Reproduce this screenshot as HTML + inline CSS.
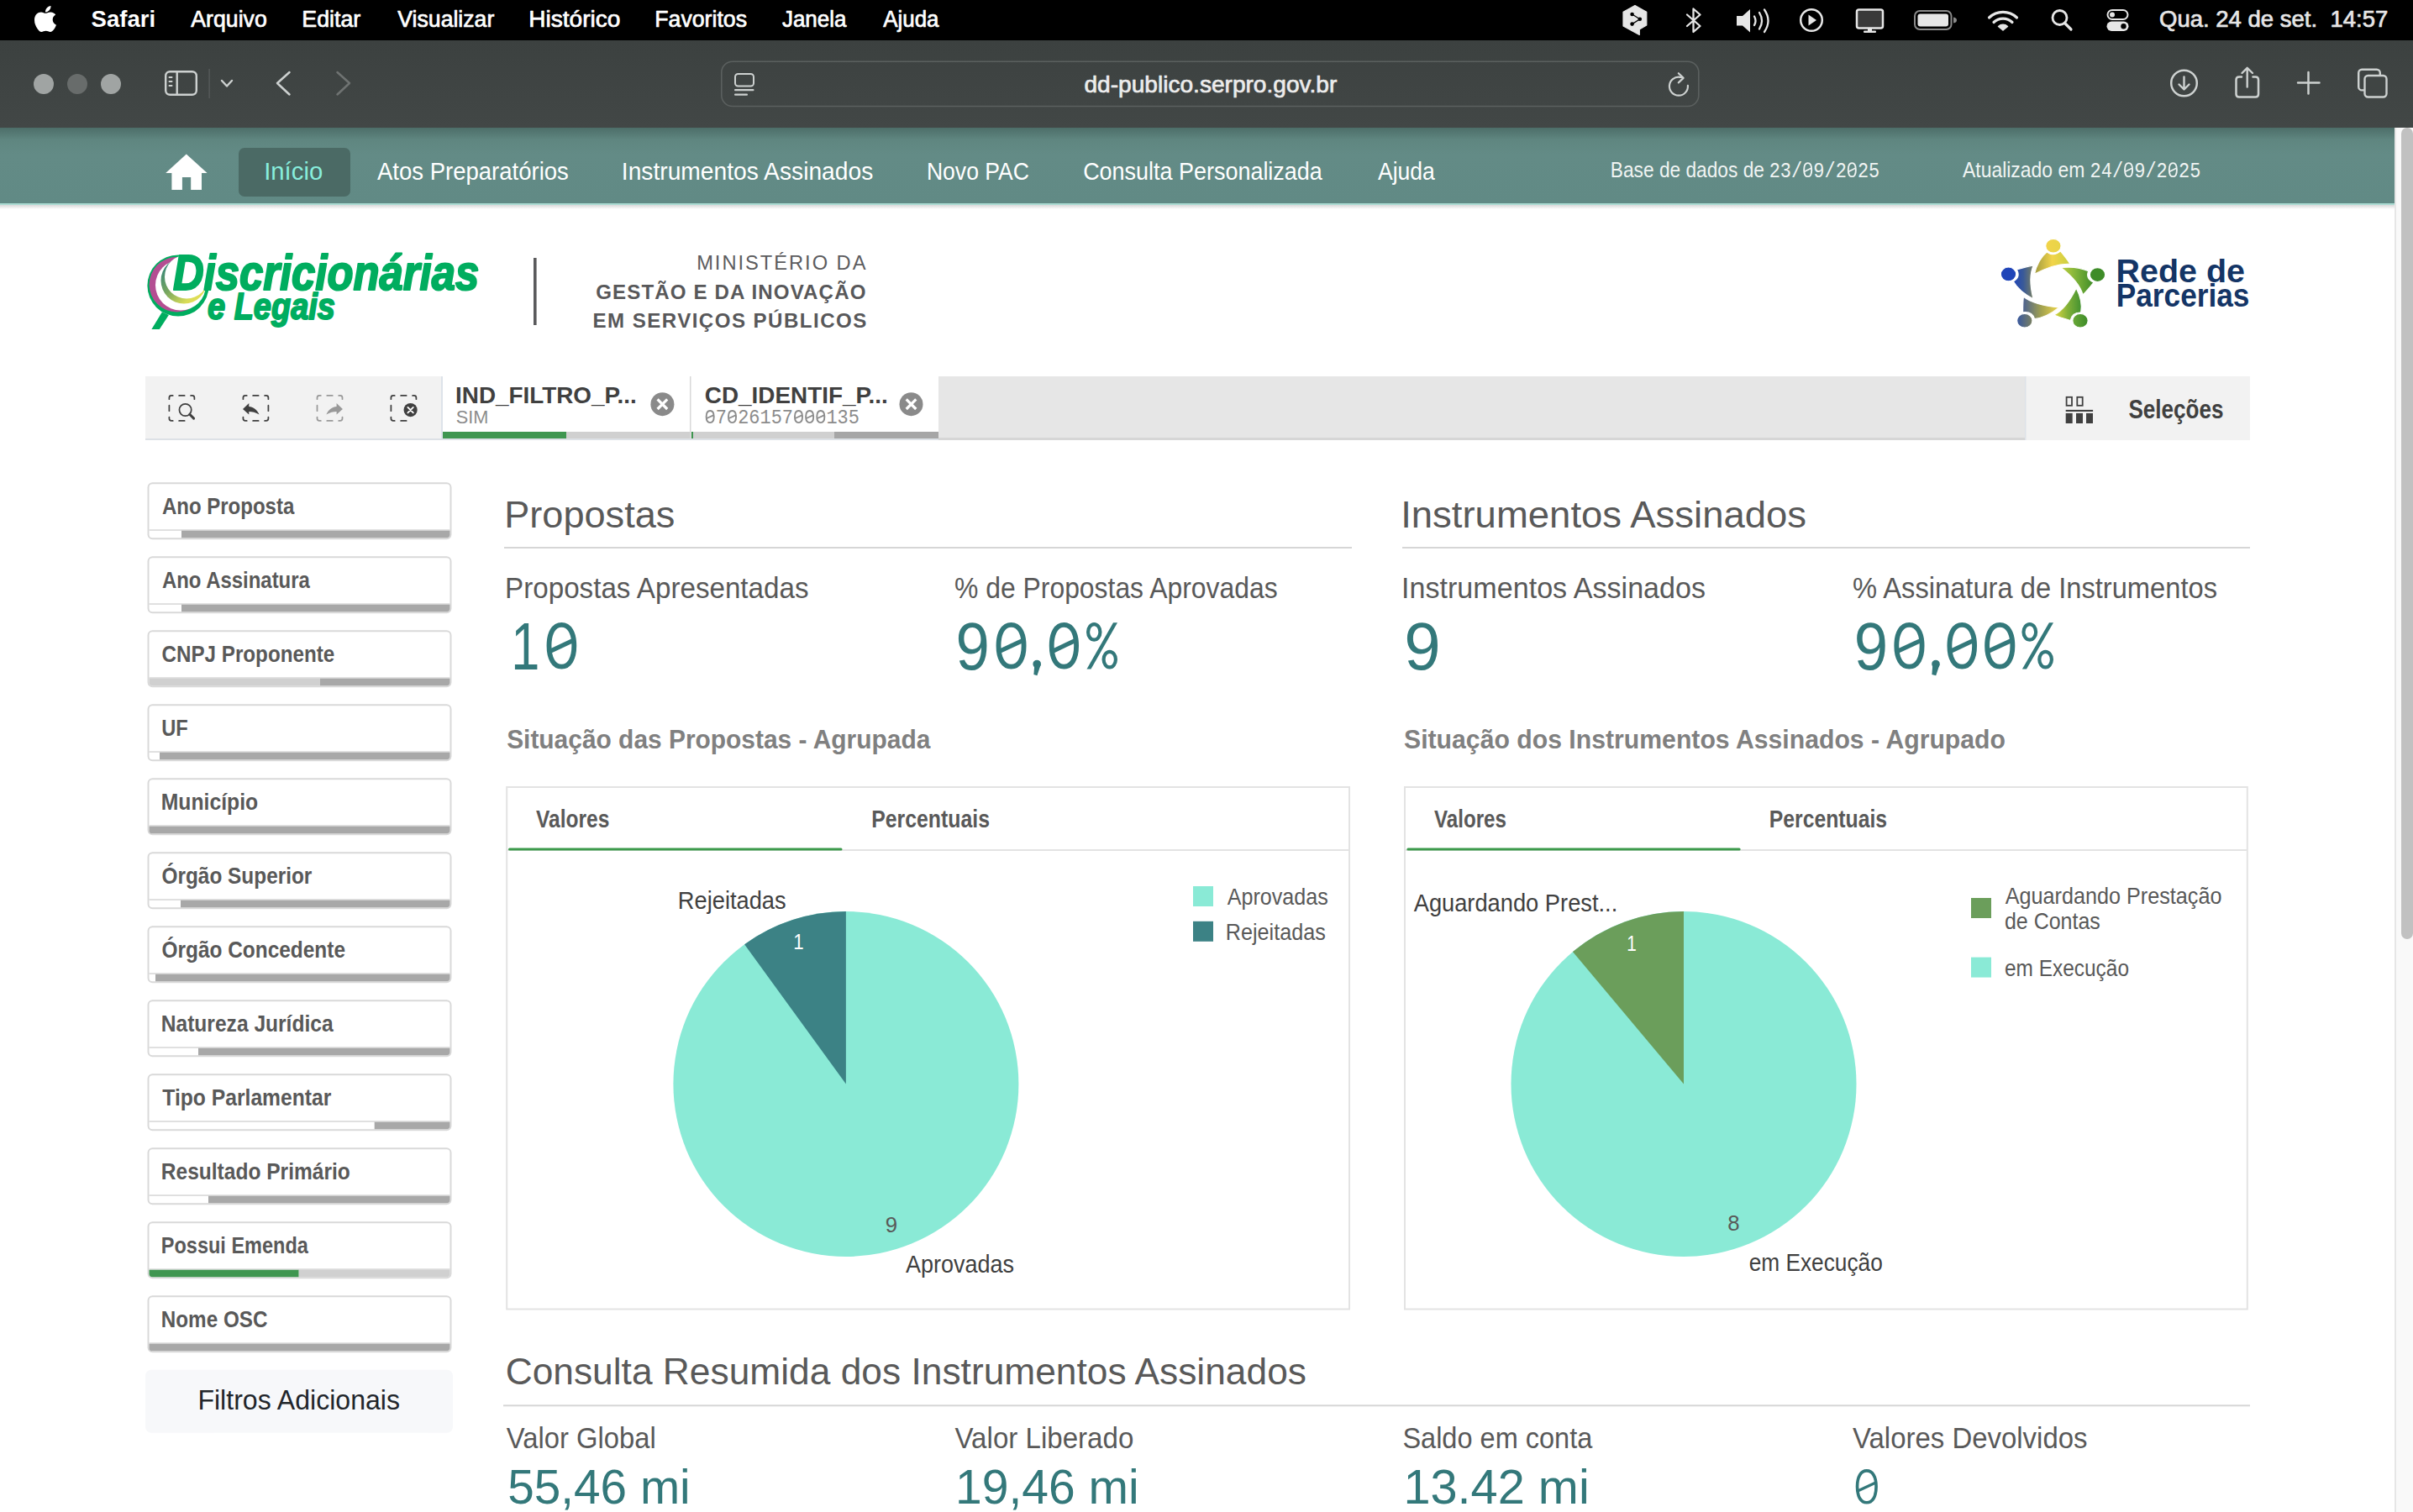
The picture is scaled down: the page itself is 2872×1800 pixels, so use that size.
<!DOCTYPE html>
<html><head><meta charset="utf-8"><title>Discricionárias e Legais</title>
<style>
html,body{margin:0;padding:0;background:#fff;width:2872px;height:1800px;overflow:hidden}
svg{display:block}
text{white-space:pre}
.sans{font-family:"Liberation Sans",sans-serif}
.sansb{font-family:"Liberation Sans",sans-serif;font-weight:bold}
.sansbi{font-family:"Liberation Sans",sans-serif;font-weight:bold;font-style:italic}
.mono{font-family:"Liberation Mono",monospace}
</style></head><body>
<svg width="2872" height="1800" viewBox="0 0 2872 1800">
<defs>
<linearGradient id="navg" x1="0" y1="0" x2="0" y2="1">
<stop offset="0" stop-color="#4d6e69"/><stop offset="0.16" stop-color="#5f8680"/><stop offset="0.35" stop-color="#638b86"/><stop offset="1" stop-color="#618a85"/>
</linearGradient>
<linearGradient id="shad" x1="0" y1="0" x2="0" y2="1">
<stop offset="0" stop-color="#d8d8d8"/><stop offset="1" stop-color="#ffffff"/>
</linearGradient>
<linearGradient id="tbg" x1="0" y1="0" x2="0" y2="1"><stop offset="0" stop-color="#3c4140"/><stop offset="1" stop-color="#424746"/></linearGradient>
</defs>
<rect x="0" y="0" width="2872" height="1800" fill="#ffffff"/>
<!-- menu bar -->
<rect x="0" y="0" width="2872" height="48" fill="#000"/>
<!-- safari toolbar -->
<rect x="0" y="48" width="2872" height="104" fill="url(#tbg)"/>
<circle cx="52" cy="100" r="12" fill="#a0a4a3"/>
<circle cx="92" cy="100" r="12" fill="#686c6b"/>
<circle cx="132" cy="100" r="12" fill="#a0a4a3"/>
<!-- nav -->
<rect x="0" y="152" width="2850" height="90" fill="url(#navg)"/>
<rect x="0" y="242" width="2850" height="2" fill="#aadbd2"/>
<rect x="0" y="244" width="2850" height="5" fill="url(#shad)"/>
<rect x="284" y="176" width="133" height="58" rx="7" fill="#4b6a65"/>
<!-- scrollbar -->
<rect x="2850" y="152" width="22" height="1648" fill="#f9f9f9"/>
<rect x="2850" y="152" width="2" height="1648" fill="#e6e6e6"/>
<rect x="2858" y="152" width="14" height="966" rx="7" fill="#c1c1c1"/>
<!-- selection toolbar -->
<rect x="173" y="448" width="2505" height="74" fill="#f2f2f2"/>
<rect x="1117" y="448" width="1293" height="74" fill="#e6e6e6"/>
<rect x="173" y="522" width="2237" height="2" fill="#dde1e6"/>
<rect x="1117" y="521" width="1293" height="3" fill="#d6d6d6"/>
<rect x="2410" y="448" width="268" height="76" fill="#f2f2f2"/><rect x="2410" y="448" width="1.5" height="76" fill="#dde2e8"/>
<rect x="525" y="448" width="2" height="74" fill="#dde3ea"/>
<rect x="527" y="448" width="294" height="66" fill="#fff"/>
<rect x="527" y="514" width="147" height="8" fill="#3f9650"/>
<rect x="674" y="514" width="147" height="8" fill="#d0d0d0"/>
<rect x="821" y="448" width="1.6" height="74" fill="#d8d8d8"/>
<rect x="822.6" y="448" width="294.4" height="66" fill="#fff"/>
<rect x="822.6" y="514" width="170.4" height="8" fill="#d0d0d0"/>
<rect x="823" y="514" width="2" height="8" fill="#3f9650"/>
<rect x="993" y="514" width="124" height="8" fill="#a6a6a6"/>
<!-- filter boxes -->
<g id="filters"><rect x="176.5" y="575.3" width="360" height="66" rx="5" fill="#fff" stroke="#d9d9d9" stroke-width="2"/>
<rect x="177.5" y="630.3" width="358" height="1.5" fill="#d6d6d6"/>
<path d="M216 631.8 H535.5 V636.3 A4 4 0 0 1 531.5 640.3 H216 Z" fill="#a8a8a8"/>
<rect x="176.5" y="663.3" width="360" height="66" rx="5" fill="#fff" stroke="#d9d9d9" stroke-width="2"/>
<rect x="177.5" y="718.3" width="358" height="1.5" fill="#d6d6d6"/>
<path d="M216 719.8 H535.5 V724.3 A4 4 0 0 1 531.5 728.3 H216 Z" fill="#a8a8a8"/>
<rect x="176.5" y="751.3" width="360" height="66" rx="5" fill="#fff" stroke="#d9d9d9" stroke-width="2"/>
<rect x="177.5" y="806.3" width="358" height="1.5" fill="#d6d6d6"/>
<path d="M177.5 807.8 H381 V816.3 H181.5 A4 4 0 0 1 177.5 812.3 Z" fill="#d0d0d0"/>
<path d="M381 807.8 H535.5 V812.3 A4 4 0 0 1 531.5 816.3 H381 Z" fill="#a8a8a8"/>
<rect x="176.5" y="839.3" width="360" height="66" rx="5" fill="#fff" stroke="#d9d9d9" stroke-width="2"/>
<rect x="177.5" y="894.3" width="358" height="1.5" fill="#d6d6d6"/>
<path d="M190 895.8 H535.5 V900.3 A4 4 0 0 1 531.5 904.3 H190 Z" fill="#a8a8a8"/>
<rect x="176.5" y="927.3" width="360" height="66" rx="5" fill="#fff" stroke="#d9d9d9" stroke-width="2"/>
<rect x="177.5" y="982.3" width="358" height="1.5" fill="#d6d6d6"/>
<path d="M175.5 983.8 H535.5 V988.3 A4 4 0 0 1 531.5 992.3 H179.5 A4 4 0 0 1 177.5 988.3 V983.8 Z" fill="#a8a8a8"/>
<rect x="176.5" y="1015.3" width="360" height="66" rx="5" fill="#fff" stroke="#d9d9d9" stroke-width="2"/>
<rect x="177.5" y="1070.3" width="358" height="1.5" fill="#d6d6d6"/>
<path d="M215 1071.8 H535.5 V1076.3 A4 4 0 0 1 531.5 1080.3 H215 Z" fill="#a8a8a8"/>
<rect x="176.5" y="1103.3" width="360" height="66" rx="5" fill="#fff" stroke="#d9d9d9" stroke-width="2"/>
<rect x="177.5" y="1158.3" width="358" height="1.5" fill="#d6d6d6"/>
<path d="M185 1159.8 H535.5 V1164.3 A4 4 0 0 1 531.5 1168.3 H185 Z" fill="#a8a8a8"/>
<rect x="176.5" y="1191.3" width="360" height="66" rx="5" fill="#fff" stroke="#d9d9d9" stroke-width="2"/>
<rect x="177.5" y="1246.3" width="358" height="1.5" fill="#d6d6d6"/>
<path d="M236 1247.8 H535.5 V1252.3 A4 4 0 0 1 531.5 1256.3 H236 Z" fill="#a8a8a8"/>
<rect x="176.5" y="1279.3" width="360" height="66" rx="5" fill="#fff" stroke="#d9d9d9" stroke-width="2"/>
<rect x="177.5" y="1334.3" width="358" height="1.5" fill="#d6d6d6"/>
<path d="M445.7 1335.8 H535.5 V1340.3 A4 4 0 0 1 531.5 1344.3 H445.7 Z" fill="#a8a8a8"/>
<rect x="176.5" y="1367.3" width="360" height="66" rx="5" fill="#fff" stroke="#d9d9d9" stroke-width="2"/>
<rect x="177.5" y="1422.3" width="358" height="1.5" fill="#d6d6d6"/>
<path d="M248 1423.8 H535.5 V1428.3 A4 4 0 0 1 531.5 1432.3 H248 Z" fill="#a8a8a8"/>
<rect x="176.5" y="1455.3" width="360" height="66" rx="5" fill="#fff" stroke="#d9d9d9" stroke-width="2"/>
<rect x="177.5" y="1510.3" width="358" height="1.5" fill="#d6d6d6"/>
<path d="M177.5 1511.8 H355.7 V1520.3 H181.5 A4 4 0 0 1 177.5 1516.3 Z" fill="#3f9650"/>
<path d="M355.7 1511.8 H535.5 V1516.3 A4 4 0 0 1 531.5 1520.3 H355.7 Z" fill="#d0d0d0"/>
<rect x="176.5" y="1543.3" width="360" height="66" rx="5" fill="#fff" stroke="#d9d9d9" stroke-width="2"/>
<rect x="177.5" y="1598.3" width="358" height="1.5" fill="#d6d6d6"/>
<path d="M175.5 1599.8 H535.5 V1604.3 A4 4 0 0 1 531.5 1608.3 H179.5 A4 4 0 0 1 177.5 1604.3 V1599.8 Z" fill="#a8a8a8"/></g>
<!-- main lines -->
<rect x="600" y="651" width="1009" height="2" fill="#d6d6d6"/>
<rect x="1669" y="651" width="1009" height="2" fill="#d6d6d6"/>
<rect x="599" y="1672.3" width="2079" height="2" fill="#d6d6d6"/>
<!-- chart boxes -->
<rect x="603.2" y="937" width="1002.8" height="621.5" fill="none" stroke="#e3e3e3" stroke-width="2"/>
<rect x="1672" y="937" width="1002.8" height="621.5" fill="none" stroke="#e3e3e3" stroke-width="2"/>
<rect x="604" y="1011" width="1001" height="2" fill="#e3e3e3"/>
<rect x="1673" y="1011" width="1001" height="2" fill="#e3e3e3"/>
<rect x="605" y="1009.5" width="397.5" height="3" rx="1.5" fill="#3d9a4c"/>
<rect x="1674.4" y="1009.5" width="397.2" height="3" rx="1.5" fill="#3d9a4c"/>
<!-- pies -->
<circle cx="1006.9" cy="1290.5" r="205.5" fill="#8aead6"/>
<path d="M1006.9 1290.5 L1006.9 1085 A205.5 205.5 0 0 0 886.1 1124.2 Z" fill="#3c8285"/>
<circle cx="2004" cy="1290.5" r="205.5" fill="#8aead6"/>
<path d="M2004 1290.5 L2004 1085 A205.5 205.5 0 0 0 1871.9 1133.1 Z" fill="#6b9e5b"/>
<rect x="1420" y="1055" width="24" height="24" fill="#8aead6"/>
<rect x="1420" y="1096.8" width="24" height="24" fill="#3c8285"/>
<rect x="2346" y="1069" width="24" height="24" fill="#6b9e5b"/>
<rect x="2346" y="1139.6" width="24" height="24" fill="#8aead6"/>
<!-- filtros adicionais -->
<rect x="173" y="1630.7" width="366" height="75" rx="7" fill="#f7f8fa"/>
<path transform="translate(40.72,4.79) scale(0.06904)" d="M318.7 268.7c-.2-36.7 16.4-64.4 50-84.8-18.8-26.9-47.2-41.7-84.7-44.6-35.5-2.8-74.3 20.7-88.5 20.7-15 0-49.4-19.7-76.4-19.7C63.3 141.2 4 184.8 4 273.5q0 39.3 14.4 81.2c12.8 36.7 59 126.7 107.2 125.2 25.2-.6 43-17.9 75.8-17.9 31.8 0 48.3 17.9 76.4 17.9 48.6-.7 90.4-82.5 102.6-119.3-65.2-30.7-61.7-90-61.7-91.9zm-56.6-164.2c27.3-32.4 24.8-61.9 24-72.5-24.1 1.4-52 16.4-67.9 34.9-17.5 19.8-27.8 44.3-25.6 71.9 26.1 2 49.9-11.4 69.5-34.3z" fill="#fff"/>
<path d="M1946 6.5 L1959.8 14.3 L1959.8 30 L1951.3 35 L1951.3 41.5 L1947.5 39.5 L1932 31 L1932 14.3 Z" fill="#e6e6e6" stroke="#e6e6e6" stroke-width="1.2" stroke-linejoin="round"/>
<path d="M1942.6 17 L1951.8 22.8 L1942.6 28.6" fill="none" stroke="#000" stroke-width="1.3"/>
<circle cx="1942.6" cy="17" r="2.3" fill="#000"/><circle cx="1951.8" cy="22.8" r="2.3" fill="#000"/><circle cx="1942.6" cy="28.6" r="2.3" fill="#000"/>
<path d="M2008 17.5 L2023.5 31 L2015.5 38 L2015.5 10.5 L2023.5 17.5 L2008 31" fill="none" stroke="#e6e6e6" stroke-width="2.3" stroke-linejoin="round" stroke-linecap="round"/>
<path d="M2067 19 H2074 L2083 11 V38.5 L2074 30.5 H2067 Z" fill="#e6e6e6"/>
<path d="M2088 19.5 Q2091 24.7 2088 30" fill="none" stroke="#e6e6e6" stroke-width="2.3" stroke-linecap="round"/>
<path d="M2094 15 Q2100 24.7 2094 34.5" fill="none" stroke="#e6e6e6" stroke-width="2.3" stroke-linecap="round"/>
<path d="M2100 11.5 Q2109 24.7 2100 38" fill="none" stroke="#e6e6e6" stroke-width="2.3" stroke-linecap="round"/>
<circle cx="2156" cy="24" r="12.8" fill="none" stroke="#e6e6e6" stroke-width="2.5"/>
<path d="M2152.5 17.5 L2162 24 L2152.5 30.5 Z" fill="#e6e6e6"/>
<rect x="2210" y="11.5" width="31" height="22" rx="2.5" fill="#3a3a3a" stroke="#e6e6e6" stroke-width="2.5"/>
<rect x="2223" y="34" width="5" height="3" fill="#e6e6e6"/><rect x="2218" y="36.5" width="15" height="2.5" rx="1" fill="#e6e6e6"/>
<rect x="2279" y="13" width="43.5" height="22" rx="6" fill="none" stroke="#8a8a8a" stroke-width="2"/>
<rect x="2282.5" y="16.5" width="36.5" height="15" rx="3" fill="#e6e6e6"/>
<path d="M2325 20.5 Q2329 21 2329 24 Q2329 27 2325 27.5 Z" fill="#8a8a8a"/>
<path d="M2367.5 21 A24 24 0 0 1 2400.5 21" fill="none" stroke="#e6e6e6" stroke-width="3.2" stroke-linecap="round"/>
<path d="M2373 26.5 A16 16 0 0 1 2395 26.5" fill="none" stroke="#e6e6e6" stroke-width="3.2" stroke-linecap="round"/>
<path d="M2384 36 L2378.5 31.5 A8 8 0 0 1 2389.5 31.5 Z" fill="#e6e6e6" stroke="#e6e6e6" stroke-width="1.5" stroke-linejoin="round"/>
<circle cx="2451.5" cy="21" r="8.5" fill="none" stroke="#e6e6e6" stroke-width="2.8"/>
<path d="M2457.5 27.5 L2465 35" stroke="#e6e6e6" stroke-width="3.2" stroke-linecap="round"/>
<rect x="2508.5" y="12" width="24" height="11" rx="5.5" fill="none" stroke="#e6e6e6" stroke-width="2"/>
<circle cx="2514" cy="17.5" r="3" fill="#e6e6e6"/>
<rect x="2507.5" y="25.5" width="26" height="11.5" rx="5.75" fill="#e6e6e6"/>
<circle cx="2527.5" cy="31.2" r="3.2" fill="#000"/>
<rect x="197.2" y="85.2" width="36.6" height="27.6" rx="5" fill="none" stroke="#cdd1d0" stroke-width="2.4"/>
<rect x="209.5" y="86" width="2.4" height="26" fill="#cdd1d0"/>
<rect x="200.5" y="91" width="5" height="2" rx="1" fill="#cdd1d0"/>
<rect x="200.5" y="96" width="5" height="2" rx="1" fill="#cdd1d0"/>
<rect x="200.5" y="101" width="5" height="2" rx="1" fill="#cdd1d0"/>
<rect x="248.5" y="82" width="1.2" height="35" fill="#5a5f5e"/>
<path d="M264 96 L270 102.5 L276 96" fill="none" stroke="#cdd1d0" stroke-width="2.4" stroke-linecap="round" stroke-linejoin="round"/>
<path d="M344.5 86 L330 99 L344.5 112.5" fill="none" stroke="#cdd1d0" stroke-width="2.5" stroke-linecap="round" stroke-linejoin="round"/>
<path d="M401.5 86 L416 99 L401.5 112.5" fill="none" stroke="#6f7372" stroke-width="2.5" stroke-linecap="round" stroke-linejoin="round"/>
<rect x="858.8" y="73.2" width="1163" height="53.3" rx="13" fill="none" stroke="#5b605f" stroke-width="1.6"/>
<rect x="875" y="88" width="22" height="14.5" rx="3.5" fill="none" stroke="#cdd1d0" stroke-width="2"/>
<rect x="874" y="106" width="23.5" height="2.2" rx="1" fill="#cdd1d0"/><rect x="874" y="111.5" width="16" height="2.2" rx="1" fill="#cdd1d0"/>
<path d="M2008.9 101.8 A11 11 0 1 1 1999.5 91.8 L2002 92" fill="none" stroke="#cdd1d0" stroke-width="2.2" stroke-linecap="round"/>
<path d="M1997.8 87.2 L2003.6 92.9 L1997.8 98.4" fill="none" stroke="#cdd1d0" stroke-width="2.2" stroke-linecap="round" stroke-linejoin="round"/>
<circle cx="2599.5" cy="99" r="15.3" fill="none" stroke="#cdd1d0" stroke-width="2.5"/>
<path d="M2599.5 91.5 V106 M2593.5 100.5 L2599.5 106.5 L2605.5 100.5" fill="none" stroke="#cdd1d0" stroke-width="2.4" stroke-linecap="round" stroke-linejoin="round"/>
<path d="M2668 91.5 H2665 Q2661.5 91.5 2661.5 95 V112 Q2661.5 115.5 2665 115.5 H2684.5 Q2688 115.5 2688 112 V95 Q2688 91.5 2684.5 91.5 H2681.5" fill="none" stroke="#cdd1d0" stroke-width="2.5" stroke-linecap="round"/>
<path d="M2674.7 103.5 V81.5 M2668.5 87 L2674.7 80.8 L2681 87" fill="none" stroke="#cdd1d0" stroke-width="2.4" stroke-linecap="round" stroke-linejoin="round"/>
<path d="M2747.5 86 V111.5 M2735 98.5 H2760.5" fill="none" stroke="#cdd1d0" stroke-width="2.5" stroke-linecap="round"/>
<rect x="2807.2" y="82.8" width="25.6" height="24.6" rx="4" fill="none" stroke="#cdd1d0" stroke-width="2.4"/>
<rect x="2814.5" y="90" width="26" height="25.5" rx="4" fill="#404544" stroke="#cdd1d0" stroke-width="2.4"/>
<path d="M221.8 183.5 L197.2 206 H204.4 V226 H216.9 V211 H227.2 V226 H240 V206 H246.6 Z" fill="#fff"/>
<path d="M201.4 475.2 V473.5 Q201.4 470.9 204.0 470.9 H205.70000000000002 M227.1 470.9 H228.8 Q231.4 470.9 231.4 473.5 V475.2 M201.4 496.59999999999997 V498.29999999999995 Q201.4 500.9 204.0 500.9 H205.70000000000002 M213.15 470.9 H219.65 M213.15 500.9 H219.65 M201.4 482.65 V489.15" fill="none" stroke="#404040" stroke-width="1.75" stroke-linecap="round"/>
<circle cx="220.6" cy="488" r="7.15" fill="none" stroke="#404040" stroke-width="1.75"/>
<path d="M225.8 493.2 L230.6 498.1" stroke="#404040" stroke-width="3" stroke-linecap="round"/>
<path d="M289.4 475.2 V473.5 Q289.4 470.9 292.0 470.9 H293.7 M315.09999999999997 470.9 H316.79999999999995 Q319.4 470.9 319.4 473.5 V475.2 M289.4 496.59999999999997 V498.29999999999995 Q289.4 500.9 292.0 500.9 H293.7 M315.09999999999997 500.9 H316.79999999999995 Q319.4 500.9 319.4 498.29999999999995 V496.59999999999997 M301.15 470.9 H307.65 M301.15 500.9 H307.65 M319.4 482.65 V489.15" fill="none" stroke="#404040" stroke-width="1.75" stroke-linecap="round"/>
<path d="M289 487 L296.3 480.1 V484 C301 484.2 305.5 487 308.6 493.6 C304.5 491 300 490 296.3 490 V493.6 Z" fill="#404040"/>
<path d="M377.5 475.2 V473.5 Q377.5 470.9 380.1 470.9 H381.8 M403.2 470.9 H404.9 Q407.5 470.9 407.5 473.5 V475.2 M377.5 496.59999999999997 V498.29999999999995 Q377.5 500.9 380.1 500.9 H381.8 M403.2 500.9 H404.9 Q407.5 500.9 407.5 498.29999999999995 V496.59999999999997 M389.25 470.9 H395.75 M389.25 500.9 H395.75 M377.5 482.65 V489.15" fill="none" stroke="#999999" stroke-width="1.75" stroke-linecap="round"/>
<path d="M407.9 487 L400.59999999999997 480.1 V484 C395.9 484.2 391.4 487 388.29999999999995 493.6 C392.4 491 396.9 490 400.59999999999997 490 V493.6 Z" fill="#999999"/>
<path d="M465.4 475.2 V473.5 Q465.4 470.9 468.0 470.9 H469.7 M491.09999999999997 470.9 H492.79999999999995 Q495.4 470.9 495.4 473.5 V475.2 M465.4 496.59999999999997 V498.29999999999995 Q465.4 500.9 468.0 500.9 H469.7 M477.15 470.9 H483.65 M477.15 500.9 H483.65 M465.4 482.65 V489.15" fill="none" stroke="#404040" stroke-width="1.75" stroke-linecap="round"/>
<circle cx="488.6" cy="488.1" r="8.1" fill="#404040"/>
<path d="M485.4 484.9 L491.8 491.3 M491.8 484.9 L485.4 491.3" stroke="#fff" stroke-width="1.9" stroke-linecap="round"/>
<circle cx="788.4" cy="481.2" r="14" fill="#8a8a8a"/>
<path d="M782.6 475.4 L794.1999999999999 487 M794.1999999999999 475.4 L782.6 487" stroke="#fff" stroke-width="3.2" stroke-linecap="butt"/>
<circle cx="1084.5" cy="481.2" r="14" fill="#8a8a8a"/>
<path d="M1078.7 475.4 L1090.3 487 M1090.3 475.4 L1078.7 487" stroke="#fff" stroke-width="3.2" stroke-linecap="butt"/>
<rect x="2459.6" y="472.8" width="6.4" height="10" fill="none" stroke="#404040" stroke-width="1.8"/>
<rect x="2472.3" y="472.8" width="6.4" height="10" fill="none" stroke="#404040" stroke-width="1.8"/>
<rect x="2458.7" y="487.9" width="32.4" height="2.1" fill="#404040"/>
<rect x="2458.7" y="491.9" width="8" height="12.1" fill="#404040"/>
<rect x="2471" y="491.9" width="8" height="12.1" fill="#404040"/>
<rect x="2483" y="491.9" width="8" height="12.1" fill="#404040"/>
<defs><linearGradient id="inarc" x1="0" y1="0" x2="1" y2="1"><stop offset="0" stop-color="#1f7a80"/><stop offset="0.45" stop-color="#7aa860"/><stop offset="0.75" stop-color="#d8dc58"/><stop offset="1" stop-color="#f0e050"/></linearGradient></defs>
<path d="M180.4 391.9 L189.8 391.9 L200.9 374.9 L192.9 371.4 Z" fill="#00ad5f"/>
<circle cx="212" cy="340" r="36.6" fill="#00ad5f"/>
<circle cx="210.3" cy="338.7" r="32.7" fill="#b44e92"/>
<circle cx="215" cy="339.5" r="30" fill="#fff"/>
<circle cx="219" cy="334" r="27.5" fill="url(#inarc)"/>
<circle cx="222" cy="329.5" r="26" fill="#fff"/>
<rect x="635" y="307" width="3.6" height="80" fill="#5a5a5c"/>
<defs><linearGradient id="fg0" gradientUnits="userSpaceOnUse" x1="2421.4" y1="0" x2="2464.0" y2="0"><stop offset="0" stop-color="#a09a40"/><stop offset="0.5" stop-color="#f2d44a"/><stop offset="1" stop-color="#c8d040"/></linearGradient><linearGradient id="hg0" gradientUnits="userSpaceOnUse" x1="2434.9" y1="0" x2="2452.9" y2="0"><stop offset="0" stop-color="#f2d44a"/><stop offset="1" stop-color="#e8d448"/></linearGradient><linearGradient id="fg1" gradientUnits="userSpaceOnUse" x1="2453.0" y1="0" x2="2491.9" y2="0"><stop offset="0" stop-color="#c0d040"/><stop offset="0.5" stop-color="#7ab038"/><stop offset="1" stop-color="#3f8c28"/></linearGradient><linearGradient id="hg1" gradientUnits="userSpaceOnUse" x1="2487.5" y1="0" x2="2505.5" y2="0"><stop offset="0" stop-color="#3e8c28"/><stop offset="1" stop-color="#3e8c28"/></linearGradient><linearGradient id="fg2" gradientUnits="userSpaceOnUse" x1="2444.7" y1="0" x2="2478.2" y2="0"><stop offset="0" stop-color="#e0d840"/><stop offset="0.5" stop-color="#80b038"/><stop offset="1" stop-color="#3f9030"/></linearGradient><linearGradient id="hg2" gradientUnits="userSpaceOnUse" x1="2467.0" y1="0" x2="2485.0" y2="0"><stop offset="0" stop-color="#6aa838"/><stop offset="1" stop-color="#3e8c28"/></linearGradient><linearGradient id="fg3" gradientUnits="userSpaceOnUse" x1="2407.6" y1="0" x2="2450.8" y2="0"><stop offset="0" stop-color="#4a6090"/><stop offset="0.5" stop-color="#a0a050"/><stop offset="1" stop-color="#f0d84a"/></linearGradient><linearGradient id="hg3" gradientUnits="userSpaceOnUse" x1="2400.8" y1="0" x2="2418.8" y2="0"><stop offset="0" stop-color="#3858a0"/><stop offset="1" stop-color="#7a8060"/></linearGradient><linearGradient id="fg4" gradientUnits="userSpaceOnUse" x1="2396.4" y1="0" x2="2420.4" y2="0"><stop offset="0" stop-color="#1f44b8"/><stop offset="0.5" stop-color="#3a5a98"/><stop offset="1" stop-color="#7a8060"/></linearGradient><linearGradient id="hg4" gradientUnits="userSpaceOnUse" x1="2381.5" y1="0" x2="2399.5" y2="0"><stop offset="0" stop-color="#1f44b8"/><stop offset="1" stop-color="#1f44b8"/></linearGradient></defs>
<path d="M2421.4 326.4 C2424.3 313.9 2430.3 304.9 2436.1 300.0 Q2444.3 305.9 2452.4 298.9 C2457.3 304.9 2461.3 309.9 2464.0 314.4 Q2446.7 313.0 2421.4 326.4 Z" fill="url(#fg0)" stroke="#fff" stroke-width="1.2"/>
<path d="M2453.0 318.5 C2467.3 317.1 2478.7 319.4 2485.7 322.8 Q2482.0 331.6 2491.9 336.3 C2487.0 342.4 2482.9 347.3 2479.0 351.0 Q2475.1 335.9 2453.0 318.5 Z" fill="url(#fg1)" stroke="#fff" stroke-width="1.2"/>
<path d="M2471.2 342.9 C2477.1 354.6 2478.2 365.0 2476.7 372.0 Q2466.2 371.5 2464.2 381.5 C2456.3 379.2 2449.8 377.2 2444.7 375.0 Q2459.6 367.1 2471.2 342.9 Z" fill="url(#fg2)" stroke="#fff" stroke-width="1.2"/>
<path d="M2450.8 365.9 C2440.2 374.5 2429.5 378.7 2421.5 379.6 Q2418.8 370.5 2407.6 371.9 C2407.6 364.5 2407.7 358.3 2408.4 353.3 Q2421.5 363.5 2450.8 365.9 Z" fill="url(#fg3)" stroke="#fff" stroke-width="1.2"/>
<path d="M2420.0 355.7 C2407.6 349.4 2399.9 341.5 2396.4 335.1 Q2405.3 329.9 2400.3 320.9 C2408.2 318.6 2414.8 316.7 2420.4 315.8 Q2413.6 330.1 2420.0 355.7 Z" fill="url(#fg4)" stroke="#fff" stroke-width="1.2"/>
<ellipse cx="2443.9" cy="292.7" rx="9.2" ry="8.4" fill="url(#hg0)" stroke="#fff" stroke-width="1.2"/>
<ellipse cx="2496.5" cy="327.1" rx="9.2" ry="8.4" fill="url(#hg1)" stroke="#fff" stroke-width="1.2"/>
<ellipse cx="2476" cy="381.7" rx="9.2" ry="8.4" fill="url(#hg2)" stroke="#fff" stroke-width="1.2"/>
<ellipse cx="2409.8" cy="381.7" rx="9.2" ry="8.4" fill="url(#hg3)" stroke="#fff" stroke-width="1.2"/>
<ellipse cx="2390.5" cy="326.4" rx="9.2" ry="8.4" fill="url(#hg4)" stroke="#fff" stroke-width="1.2"/>
<text class="sansb" x="108.57" y="32.00" font-size="27.5" fill="#ffffff" textLength="76.56" lengthAdjust="spacingAndGlyphs">Safari</text>
<text class="sans" x="227.35" y="32.00" font-size="27" fill="#ffffff" textLength="90.38" lengthAdjust="spacingAndGlyphs" stroke="#ffffff" stroke-width="0.7" stroke-linejoin="round">Arquivo</text>
<text class="sans" x="359.26" y="32.00" font-size="27" fill="#ffffff" textLength="70.03" lengthAdjust="spacingAndGlyphs" stroke="#ffffff" stroke-width="0.7" stroke-linejoin="round">Editar</text>
<text class="sans" x="473.35" y="32.00" font-size="27" fill="#ffffff" textLength="114.93" lengthAdjust="spacingAndGlyphs" stroke="#ffffff" stroke-width="0.7" stroke-linejoin="round">Visualizar</text>
<text class="sans" x="629.16" y="32.00" font-size="27" fill="#ffffff" textLength="109.23" lengthAdjust="spacingAndGlyphs" stroke="#ffffff" stroke-width="0.7" stroke-linejoin="round">Histórico</text>
<text class="sans" x="779.27" y="32.00" font-size="27" fill="#ffffff" textLength="109.72" lengthAdjust="spacingAndGlyphs" stroke="#ffffff" stroke-width="0.7" stroke-linejoin="round">Favoritos</text>
<text class="sans" x="930.94" y="32.00" font-size="27" fill="#ffffff" textLength="76.54" lengthAdjust="spacingAndGlyphs" stroke="#ffffff" stroke-width="0.7" stroke-linejoin="round">Janela</text>
<text class="sans" x="1051.35" y="32.00" font-size="27" fill="#ffffff" textLength="66.14" lengthAdjust="spacingAndGlyphs" stroke="#ffffff" stroke-width="0.7" stroke-linejoin="round">Ajuda</text>
<text class="sans" x="2570.06" y="32.00" font-size="27" fill="#e6e6e6" textLength="272.20" lengthAdjust="spacingAndGlyphs" stroke="#e6e6e6" stroke-width="0.7" stroke-linejoin="round">Qua. 24 de set.  14:57</text>
<text class="sans" x="1290.47" y="110.40" font-size="27.6" fill="#ececec" textLength="300.81" lengthAdjust="spacingAndGlyphs" stroke="#ececec" stroke-width="0.7" stroke-linejoin="round">dd-publico.serpro.gov.br</text>
<text class="sans" x="314.21" y="214.00" font-size="29.6" fill="#88eedd" textLength="69.97" lengthAdjust="spacingAndGlyphs">Início</text>
<text class="sans" x="449.00" y="214.00" font-size="29.6" fill="#ffffff" textLength="227.86" lengthAdjust="spacingAndGlyphs">Atos Preparatórios</text>
<text class="sans" x="739.81" y="214.00" font-size="29.6" fill="#ffffff" textLength="299.47" lengthAdjust="spacingAndGlyphs">Instrumentos Assinados</text>
<text class="sans" x="1102.93" y="214.00" font-size="29.6" fill="#ffffff" textLength="122.00" lengthAdjust="spacingAndGlyphs">Novo PAC</text>
<text class="sans" x="1289.14" y="214.00" font-size="29.6" fill="#ffffff" textLength="284.69" lengthAdjust="spacingAndGlyphs">Consulta Personalizada</text>
<text class="sans" x="1640.00" y="214.00" font-size="29.6" fill="#ffffff" textLength="67.83" lengthAdjust="spacingAndGlyphs">Ajuda</text>
<text class="sans" x="1916.83" y="211.00" font-size="26.2" fill="#f0f4f3" textLength="183.09" lengthAdjust="spacingAndGlyphs">Base de dados de</text>
<path d="M2151.70 194.11 C2154.51 194.11 2156.23 197.16 2156.23 202.13 C2156.23 207.10 2154.51 210.15 2151.70 210.15 C2148.89 210.15 2147.17 207.10 2147.17 202.13 C2147.17 197.16 2148.89 194.11 2151.70 194.11 Z" fill="none" stroke="#f0f4f3" stroke-width="1.90"/>
<path d="M2147.17 204.46 L2156.23 199.89" stroke="#f0f4f3" stroke-width="1.71"/>
<path d="M2204.31 194.11 C2207.12 194.11 2208.84 197.16 2208.84 202.13 C2208.84 207.10 2207.12 210.15 2204.31 210.15 C2201.50 210.15 2199.78 207.10 2199.78 202.13 C2199.78 197.16 2201.50 194.11 2204.31 194.11 Z" fill="none" stroke="#f0f4f3" stroke-width="1.90"/>
<path d="M2199.78 204.46 L2208.84 199.89" stroke="#f0f4f3" stroke-width="1.71"/>
<text class="mono" x="2105.73" y="211.10" font-size="26.7" fill="#f0f4f3" textLength="131.54" lengthAdjust="spacingAndGlyphs">23/ 9/2 25</text>
<text class="sans" x="2336.00" y="211.00" font-size="26.2" fill="#f0f4f3" textLength="145.29" lengthAdjust="spacingAndGlyphs">Atualizado em</text>
<path d="M2533.60 194.11 C2536.42 194.11 2538.14 197.16 2538.14 202.13 C2538.14 207.10 2536.42 210.15 2533.60 210.15 C2530.79 210.15 2529.06 207.10 2529.06 202.13 C2529.06 197.16 2530.79 194.11 2533.60 194.11 Z" fill="none" stroke="#f0f4f3" stroke-width="1.90"/>
<path d="M2529.06 204.46 L2538.14 199.89" stroke="#f0f4f3" stroke-width="1.71"/>
<path d="M2586.34 194.11 C2589.16 194.11 2590.88 197.16 2590.88 202.13 C2590.88 207.10 2589.16 210.15 2586.34 210.15 C2583.52 210.15 2581.80 207.10 2581.80 202.13 C2581.80 197.16 2583.52 194.11 2586.34 194.11 Z" fill="none" stroke="#f0f4f3" stroke-width="1.90"/>
<path d="M2581.80 204.46 L2590.88 199.89" stroke="#f0f4f3" stroke-width="1.71"/>
<text class="mono" x="2487.53" y="211.10" font-size="26.7" fill="#f0f4f3" textLength="131.84" lengthAdjust="spacingAndGlyphs">24/ 9/2 25</text>
<text class="sans" x="829.15" y="320.60" font-size="23.7" fill="#5c5c5e" letter-spacing="1.973">MINISTÉRIO DA</text>
<text class="sansb" x="709.25" y="355.60" font-size="24.1" fill="#58585a" letter-spacing="1.121">GESTÃO E DA INOVAÇÃO</text>
<text class="sansb" x="705.49" y="390.00" font-size="24.1" fill="#58585a" letter-spacing="1.456">EM SERVIÇOS PÚBLICOS</text>
<text class="sansb" x="2518.53" y="335.60" font-size="38.7" fill="#143566" textLength="153.45" lengthAdjust="spacingAndGlyphs">Rede de</text>
<text class="sansb" x="2518.80" y="365.40" font-size="38.4" fill="#143566" textLength="158.63" lengthAdjust="spacingAndGlyphs">Parcerias</text>
<text class="sansbi" x="205.91" y="344.70" font-size="59.6" fill="#00ad5f" textLength="364.26" lengthAdjust="spacingAndGlyphs" stroke="#00ad5f" stroke-width="2.2" stroke-linejoin="round">Discricionárias</text>
<text class="sansbi" x="247.01" y="380.00" font-size="45" fill="#00ad5f" textLength="151.94" lengthAdjust="spacingAndGlyphs" stroke="#00ad5f" stroke-width="2" stroke-linejoin="round">e Legais</text>
<text class="sansb" x="542.06" y="479.70" font-size="28.3" fill="#404040" textLength="215.59" lengthAdjust="spacingAndGlyphs">IND_FILTRO_P...</text>
<text class="sans" x="542.82" y="503.80" font-size="22.4" fill="#8c8c8c" textLength="38.64" lengthAdjust="spacingAndGlyphs">SIM</text>
<text class="sansb" x="838.83" y="479.70" font-size="28.3" fill="#404040" textLength="217.82" lengthAdjust="spacingAndGlyphs">CD_IDENTIF_P...</text>
<path d="M845.18 489.06 C848.00 489.06 849.72 491.74 849.72 496.10 C849.72 500.47 848.00 503.15 845.18 503.15 C842.37 503.15 840.65 500.47 840.65 496.10 C840.65 491.74 842.37 489.06 845.18 489.06 Z" fill="none" stroke="#8c8c8c" stroke-width="1.90"/>
<path d="M840.65 498.18 L849.72 494.11" stroke="#8c8c8c" stroke-width="1.71"/>
<path d="M871.51 489.06 C874.32 489.06 876.05 491.74 876.05 496.10 C876.05 500.47 874.32 503.15 871.51 503.15 C868.70 503.15 866.98 500.47 866.98 496.10 C866.98 491.74 868.70 489.06 871.51 489.06 Z" fill="none" stroke="#8c8c8c" stroke-width="1.90"/>
<path d="M866.98 498.18 L876.05 494.11" stroke="#8c8c8c" stroke-width="1.71"/>
<path d="M950.50 489.06 C953.31 489.06 955.03 491.74 955.03 496.10 C955.03 500.47 953.31 503.15 950.50 503.15 C947.68 503.15 945.96 500.47 945.96 496.10 C945.96 491.74 947.68 489.06 950.50 489.06 Z" fill="none" stroke="#8c8c8c" stroke-width="1.90"/>
<path d="M945.96 498.18 L955.03 494.11" stroke="#8c8c8c" stroke-width="1.71"/>
<path d="M963.66 489.06 C966.47 489.06 968.19 491.74 968.19 496.10 C968.19 500.47 966.47 503.15 963.66 503.15 C960.85 503.15 959.13 500.47 959.13 496.10 C959.13 491.74 960.85 489.06 963.66 489.06 Z" fill="none" stroke="#8c8c8c" stroke-width="1.90"/>
<path d="M959.13 498.18 L968.19 494.11" stroke="#8c8c8c" stroke-width="1.71"/>
<path d="M976.82 489.06 C979.64 489.06 981.36 491.74 981.36 496.10 C981.36 500.47 979.64 503.15 976.82 503.15 C974.01 503.15 972.29 500.47 972.29 496.10 C972.29 491.74 974.01 489.06 976.82 489.06 Z" fill="none" stroke="#8c8c8c" stroke-width="1.90"/>
<path d="M972.29 498.18 L981.36 494.11" stroke="#8c8c8c" stroke-width="1.71"/>
<text class="mono" x="838.67" y="504.10" font-size="23.8" fill="#8c8c8c" textLength="184.30" lengthAdjust="spacingAndGlyphs"> 7 26157   135</text>
<text class="sansb" x="2533.39" y="498.30" font-size="30.5" fill="#404040" textLength="113.17" lengthAdjust="spacingAndGlyphs">Seleções</text>
<text class="sansb" x="192.92" y="612.00" font-size="27.2" fill="#595959" textLength="157.42" lengthAdjust="spacingAndGlyphs">Ano Proposta</text>
<text class="sansb" x="192.93" y="700.00" font-size="27.2" fill="#595959" textLength="175.92" lengthAdjust="spacingAndGlyphs">Ano Assinatura</text>
<text class="sansb" x="192.54" y="788.00" font-size="27.2" fill="#595959" textLength="205.66" lengthAdjust="spacingAndGlyphs">CNPJ Proponente</text>
<text class="sansb" x="192.19" y="876.00" font-size="27.2" fill="#595959" textLength="31.59" lengthAdjust="spacingAndGlyphs">UF</text>
<text class="sansb" x="191.75" y="964.00" font-size="27.2" fill="#595959" textLength="115.35" lengthAdjust="spacingAndGlyphs">Município</text>
<text class="sansb" x="192.54" y="1052.00" font-size="27.2" fill="#595959" textLength="178.81" lengthAdjust="spacingAndGlyphs">Órgão Superior</text>
<text class="sansb" x="192.54" y="1140.00" font-size="27.2" fill="#595959" textLength="218.47" lengthAdjust="spacingAndGlyphs">Órgão Concedente</text>
<text class="sansb" x="191.76" y="1228.00" font-size="27.2" fill="#595959" textLength="204.88" lengthAdjust="spacingAndGlyphs">Natureza Jurídica</text>
<text class="sansb" x="193.30" y="1316.00" font-size="27.2" fill="#595959" textLength="201.05" lengthAdjust="spacingAndGlyphs">Tipo Parlamentar</text>
<text class="sansb" x="191.77" y="1404.00" font-size="27.2" fill="#595959" textLength="225.04" lengthAdjust="spacingAndGlyphs">Resultado Primário</text>
<text class="sansb" x="191.83" y="1492.00" font-size="27.2" fill="#595959" textLength="175.02" lengthAdjust="spacingAndGlyphs">Possui Emenda</text>
<text class="sansb" x="191.78" y="1580.00" font-size="27.2" fill="#595959" textLength="126.68" lengthAdjust="spacingAndGlyphs">Nome OSC</text>
<text class="sans" x="235.41" y="1678.00" font-size="33.4" fill="#22262b" textLength="240.58" lengthAdjust="spacingAndGlyphs">Filtros Adicionais</text>
<text class="sans" x="600.17" y="627.70" font-size="45" fill="#595959" textLength="203.24" lengthAdjust="spacingAndGlyphs">Propostas</text>
<text class="sans" x="1667.16" y="627.70" font-size="45" fill="#595959" textLength="482.95" lengthAdjust="spacingAndGlyphs">Instrumentos Assinados</text>
<text class="sans" x="601.12" y="711.70" font-size="34.4" fill="#595959" textLength="361.41" lengthAdjust="spacingAndGlyphs">Propostas Apresentadas</text>
<text class="sans" x="1136.01" y="711.70" font-size="34.4" fill="#595959" textLength="384.58" lengthAdjust="spacingAndGlyphs">% de Propostas Aprovadas</text>
<text class="sans" x="1668.05" y="711.70" font-size="34.4" fill="#595959" textLength="362.01" lengthAdjust="spacingAndGlyphs">Instrumentos Assinados</text>
<text class="sans" x="2204.98" y="711.70" font-size="34.4" fill="#595959" textLength="434.03" lengthAdjust="spacingAndGlyphs">% Assinatura de Instrumentos</text>
<text class="sansb" x="603.13" y="891.40" font-size="32" fill="#808080" textLength="504.18" lengthAdjust="spacingAndGlyphs">Situação das Propostas - Agrupada</text>
<text class="sansb" x="1671.03" y="891.40" font-size="32" fill="#808080" textLength="715.96" lengthAdjust="spacingAndGlyphs">Situação dos Instrumentos Assinados - Agrupado</text>
<text class="sansb" x="638.00" y="984.60" font-size="29" fill="#595959" textLength="87.40" lengthAdjust="spacingAndGlyphs">Valores</text>
<text class="sansb" x="1037.15" y="984.60" font-size="29" fill="#595959" textLength="140.86" lengthAdjust="spacingAndGlyphs">Percentuais</text>
<text class="sansb" x="1707.00" y="984.60" font-size="29" fill="#595959" textLength="85.98" lengthAdjust="spacingAndGlyphs">Valores</text>
<text class="sansb" x="2105.86" y="984.60" font-size="29" fill="#595959" textLength="140.15" lengthAdjust="spacingAndGlyphs">Percentuais</text>
<text class="sans" x="806.87" y="1082.00" font-size="29" fill="#404040" textLength="128.78" lengthAdjust="spacingAndGlyphs">Rejeitadas</text>
<text class="sans" x="944.31" y="1129.50" font-size="25.4" fill="#ffffff" textLength="12.40" lengthAdjust="spacingAndGlyphs">1</text>
<text class="sans" x="1053.69" y="1466.50" font-size="25.4" fill="#595959" textLength="14.36" lengthAdjust="spacingAndGlyphs">9</text>
<text class="sans" x="1078.00" y="1514.50" font-size="29" fill="#404040" textLength="129.14" lengthAdjust="spacingAndGlyphs">Aprovadas</text>
<text class="sans" x="1460.80" y="1077.00" font-size="28.3" fill="#595959" textLength="119.98" lengthAdjust="spacingAndGlyphs">Aprovadas</text>
<text class="sans" x="1458.83" y="1118.60" font-size="28.3" fill="#595959" textLength="118.95" lengthAdjust="spacingAndGlyphs">Rejeitadas</text>
<text class="sans" x="1682.70" y="1085.00" font-size="29" fill="#404040" textLength="242.56" lengthAdjust="spacingAndGlyphs">Aguardando Prest...</text>
<text class="sans" x="1936.30" y="1131.70" font-size="25.4" fill="#ffffff" textLength="11.54" lengthAdjust="spacingAndGlyphs">1</text>
<text class="sans" x="2056.19" y="1464.70" font-size="25.4" fill="#595959" textLength="14.35" lengthAdjust="spacingAndGlyphs">8</text>
<text class="sans" x="2081.68" y="1512.80" font-size="29" fill="#404040" textLength="159.08" lengthAdjust="spacingAndGlyphs">em Execução</text>
<text class="sans" x="2386.70" y="1075.90" font-size="28.3" fill="#595959" textLength="257.72" lengthAdjust="spacingAndGlyphs">Aguardando Prestação</text>
<text class="sans" x="2385.92" y="1106.40" font-size="28.3" fill="#595959" textLength="113.86" lengthAdjust="spacingAndGlyphs">de Contas</text>
<text class="sans" x="2385.94" y="1162.00" font-size="28.3" fill="#595959" textLength="148.05" lengthAdjust="spacingAndGlyphs">em Execução</text>
<text class="sans" x="601.63" y="1648.00" font-size="45" fill="#595959" textLength="953.35" lengthAdjust="spacingAndGlyphs">Consulta Resumida dos Instrumentos Assinados</text>
<text class="sans" x="602.80" y="1724.20" font-size="34.2" fill="#595959" textLength="178.06" lengthAdjust="spacingAndGlyphs">Valor Global</text>
<text class="sans" x="1136.50" y="1724.20" font-size="34.2" fill="#595959" textLength="212.84" lengthAdjust="spacingAndGlyphs">Valor Liberado</text>
<text class="sans" x="1669.38" y="1724.20" font-size="34.2" fill="#595959" textLength="225.91" lengthAdjust="spacingAndGlyphs">Saldo em conta</text>
<text class="sans" x="2205.00" y="1724.20" font-size="34.2" fill="#595959" textLength="279.53" lengthAdjust="spacingAndGlyphs">Valores Devolvidos</text>
<text class="sans" x="604.23" y="1789.70" font-size="58" fill="#33787a" textLength="217.51" lengthAdjust="spacingAndGlyphs">55,46 mi</text>
<text class="sans" x="1136.93" y="1789.70" font-size="58" fill="#33787a" textLength="218.83" lengthAdjust="spacingAndGlyphs">19,46 mi</text>
<text class="sans" x="1670.39" y="1790.00" font-size="58" fill="#33787a" textLength="221.41" lengthAdjust="spacingAndGlyphs">13.42 mi</text>
<text class="sans" x="608.17" y="796.50" font-size="78.93" fill="#33787a" textLength="34.12" lengthAdjust="spacingAndGlyphs">1</text>
<path d="M668.40 743.91 C677.63 743.91 683.29 753.35 683.29 768.75 C683.29 784.15 677.63 793.59 668.40 793.59 C659.17 793.59 653.51 784.15 653.51 768.75 C653.51 753.35 659.17 743.91 668.40 743.91 Z" fill="none" stroke="#33787a" stroke-width="5.83"/>
<path d="M653.51 775.97 L683.29 761.81" stroke="#33787a" stroke-width="5.24"/>
<text class="sans" x="1137.60" y="796.50" font-size="78.93" fill="#33787a" textLength="40.34" lengthAdjust="spacingAndGlyphs">9</text>
<path d="M1203.55 743.91 C1212.87 743.91 1218.59 753.35 1218.59 768.75 C1218.59 784.15 1212.87 793.59 1203.55 793.59 C1194.23 793.59 1188.51 784.15 1188.51 768.75 C1188.51 753.35 1194.23 743.91 1203.55 743.91 Z" fill="none" stroke="#33787a" stroke-width="5.83"/>
<path d="M1188.51 775.97 L1218.59 761.81" stroke="#33787a" stroke-width="5.24"/>
<circle cx="1234.20" cy="790.50" r="4.8" fill="#33787a"/>
<path d="M1238.80 791.00 L1234.40 804.30 L1230.40 803.10 L1231.20 792.50 Z" fill="#33787a"/>
<path d="M1266.40 743.91 C1275.51 743.91 1281.09 753.35 1281.09 768.75 C1281.09 784.15 1275.51 793.59 1266.40 793.59 C1257.29 793.59 1251.71 784.15 1251.71 768.75 C1251.71 753.35 1257.29 743.91 1266.40 743.91 Z" fill="none" stroke="#33787a" stroke-width="5.83"/>
<path d="M1251.71 775.97 L1281.09 761.81" stroke="#33787a" stroke-width="5.24"/>
<ellipse cx="1302.25" cy="752.38" rx="7.17" ry="9.30" fill="none" stroke="#33787a" stroke-width="4.16"/>
<ellipse cx="1320.75" cy="785.12" rx="7.17" ry="9.30" fill="none" stroke="#33787a" stroke-width="4.16"/>
<path d="M1293.50 796.50 L1298.49 796.50 L1330.00 741.30 L1325.01 741.30 Z" fill="#33787a"/>
<text class="sans" x="1671.34" y="796.50" font-size="78.93" fill="#33787a" textLength="43.42" lengthAdjust="spacingAndGlyphs">9</text>
<text class="sans" x="2206.80" y="796.50" font-size="78.93" fill="#33787a" textLength="40.34" lengthAdjust="spacingAndGlyphs">9</text>
<path d="M2272.45 743.91 C2281.83 743.91 2287.59 753.35 2287.59 768.75 C2287.59 784.15 2281.83 793.59 2272.45 793.59 C2263.07 793.59 2257.31 784.15 2257.31 768.75 C2257.31 753.35 2263.07 743.91 2272.45 743.91 Z" fill="none" stroke="#33787a" stroke-width="5.83"/>
<path d="M2257.31 775.97 L2287.59 761.81" stroke="#33787a" stroke-width="5.24"/>
<circle cx="2304.00" cy="790.50" r="4.8" fill="#33787a"/>
<path d="M2308.60 791.00 L2304.20 804.30 L2299.40 803.10 L2300.20 792.50 Z" fill="#33787a"/>
<path d="M2335.25 743.91 C2344.45 743.91 2350.09 753.35 2350.09 768.75 C2350.09 784.15 2344.45 793.59 2335.25 793.59 C2326.05 793.59 2320.41 784.15 2320.41 768.75 C2320.41 753.35 2326.05 743.91 2335.25 743.91 Z" fill="none" stroke="#33787a" stroke-width="5.83"/>
<path d="M2320.41 775.97 L2350.09 761.81" stroke="#33787a" stroke-width="5.24"/>
<path d="M2380.25 743.91 C2389.63 743.91 2395.39 753.35 2395.39 768.75 C2395.39 784.15 2389.63 793.59 2380.25 793.59 C2370.87 793.59 2365.11 784.15 2365.11 768.75 C2365.11 753.35 2370.87 743.91 2380.25 743.91 Z" fill="none" stroke="#33787a" stroke-width="5.83"/>
<path d="M2365.11 775.97 L2395.39 761.81" stroke="#33787a" stroke-width="5.24"/>
<ellipse cx="2415.80" cy="752.38" rx="7.32" ry="9.30" fill="none" stroke="#33787a" stroke-width="4.16"/>
<ellipse cx="2434.60" cy="785.12" rx="7.32" ry="9.30" fill="none" stroke="#33787a" stroke-width="4.16"/>
<path d="M2406.90 796.50 L2411.98 796.50 L2444.00 741.30 L2438.92 741.30 Z" fill="#33787a"/>
<path d="M2221.80 1750.93 C2228.79 1750.93 2233.07 1758.12 2233.07 1769.85 C2233.07 1781.58 2228.79 1788.77 2221.80 1788.77 C2214.81 1788.77 2210.53 1781.58 2210.53 1769.85 C2210.53 1758.12 2214.81 1750.93 2221.80 1750.93 Z" fill="none" stroke="#33787a" stroke-width="3.65"/>
<path d="M2210.53 1775.24 L2233.07 1764.66" stroke="#33787a" stroke-width="3.29"/>
</svg>
</body></html>
